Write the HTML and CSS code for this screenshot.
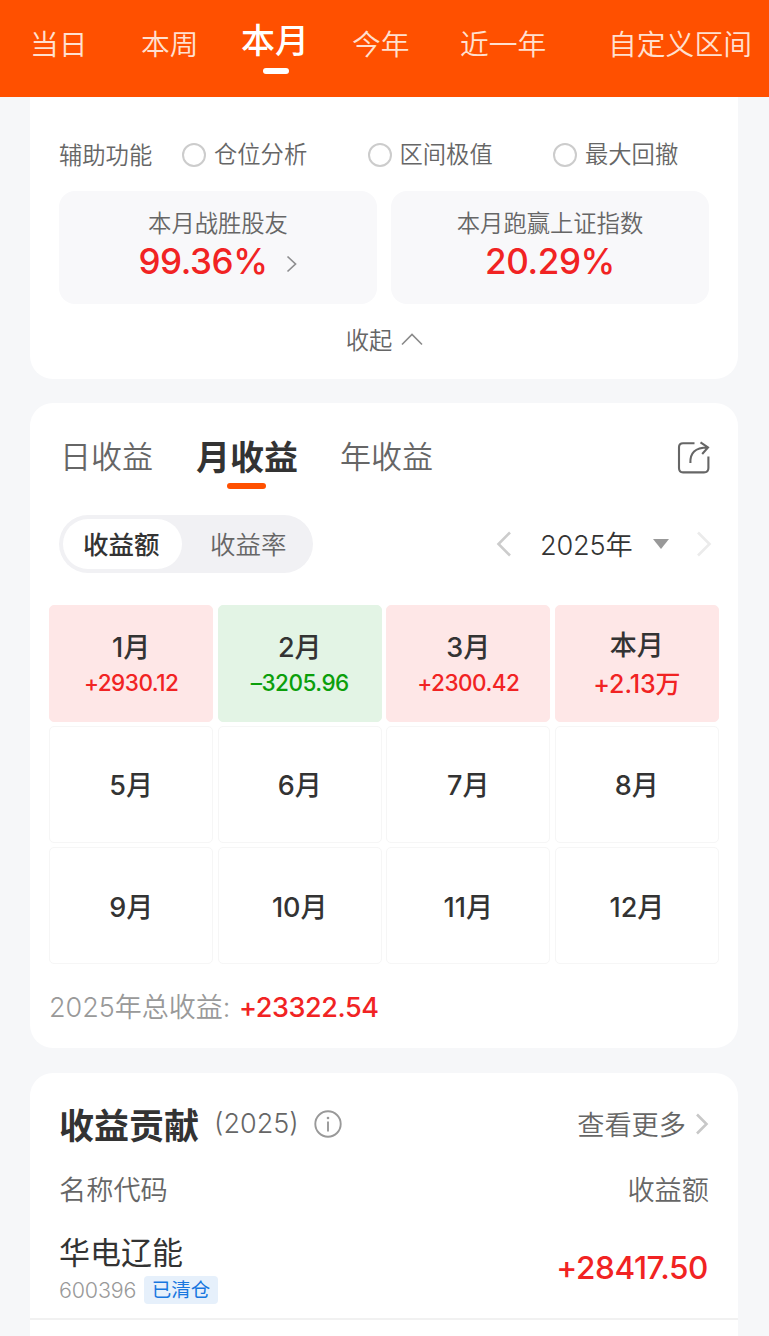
FILE: index.html
```html
<!DOCTYPE html>
<html lang="zh-CN">
<head>
<meta charset="utf-8">
<title>收益分析</title>
<link rel="stylesheet" href="styles.css">
</head>
<body>
<nav class="period-bar">
  <span class="period period-day">当日</span>
  <span class="period period-week">本周</span>
  <span class="period period-month active">本月</span>
  <span class="period period-year">今年</span>
  <span class="period period-recent">近一年</span>
  <span class="period period-custom">自定义区间</span>
</nav>
<main>
  <section class="card card-summary">
    <div class="options">
      <span class="options-title">辅助功能</span>
      <label class="option"><i class="radio"></i>仓位分析</label>
      <label class="option"><i class="radio"></i>区间极值</label>
      <label class="option"><i class="radio"></i>最大回撤</label>
    </div>
    <div class="stats">
      <div class="stat">
        <div class="stat-label">本月战胜股友</div>
        <div class="stat-value">99.36%<svg class="stat-arrow" width="12" height="18" viewBox="0 0 12 18"><path d="M1.500 1.500 9.500 9 1.500 16.500" fill="none" stroke="#8d8d8f" stroke-width="1.7"/></svg></div>
      </div>
      <div class="stat">
        <div class="stat-label">本月跑赢上证指数</div>
        <div class="stat-value">20.29%</div>
      </div>
    </div>
    <div class="collapse">收起<svg width="22" height="14" viewBox="0 0 22 14"><path d="M1 12.5 11 2.5 21 12.5" fill="none" stroke="#8a8a8a" stroke-width="1.6"/></svg></div>
  </section>

  <section class="card card-calendar">
    <div class="tabs">
      <span class="tab">日收益</span>
      <span class="tab active">月收益</span>
      <span class="tab">年收益</span>
      <svg class="share" width="34" height="34" viewBox="0 0 34 34" fill="none" stroke="#666" stroke-width="2.1"><path d="M17.5 2.2H6Q2 2.2 2 6.2V27Q2 31.400 6 31.400H27Q31.400 31.400 31.400 27V15.500"/><path d="M13.400 22C13 12 18 6.500 30.500 6.500M23.500 1.400 31 6.500 25.200 13"/></svg>
    </div>
    <div class="controls">
      <div class="segment"><span class="seg active">收益额</span><span class="seg">收益率</span></div>
      <div class="year-picker">
        <svg class="prev" width="16" height="26" viewBox="0 0 16 26"><path d="M14 1.500 2.500 13 14 24.500" fill="none" stroke="#ccc" stroke-width="2.600"/></svg>
        <span class="year">2025年</span>
        <svg class="caret" width="16" height="10" viewBox="0 0 16 10"><path d="M0 0H16L8 10Z" fill="#999"/></svg>
        <svg class="next" width="16" height="26" viewBox="0 0 16 26"><path d="M2 1.500 13.500 13 2 24.500" fill="none" stroke="#ebebeb" stroke-width="2.600"/></svg>
      </div>
    </div>
    <div class="months">
      <div class="month gain"><b>1月</b><em>+2930.12</em></div>
      <div class="month loss"><b>2月</b><em>–3205.96</em></div>
      <div class="month gain"><b>3月</b><em>+2300.42</em></div>
      <div class="month gain current"><b>本月</b><em>+2.13万</em></div>
      <div class="month"><b>5月</b></div>
      <div class="month"><b>6月</b></div>
      <div class="month"><b>7月</b></div>
      <div class="month"><b>8月</b></div>
      <div class="month"><b>9月</b></div>
      <div class="month"><b>10月</b></div>
      <div class="month"><b>11月</b></div>
      <div class="month"><b>12月</b></div>
    </div>
    <div class="total"><span class="total-label">2025年总收益:</span><span class="total-value">+23322.54</span></div>
  </section>

  <section class="card card-contrib">
    <header class="contrib-head">
      <h2>收益贡献</h2>
      <span class="contrib-year">(2025)</span>
      <svg class="info" width="28" height="28" viewBox="0 0 28 28"><circle cx="14" cy="14" r="12.700" fill="none" stroke="#999" stroke-width="1.900"/><circle cx="14" cy="8" r="1.300" fill="#999"/><path d="M14 11.500V21.500" stroke="#999" stroke-width="1.900"/></svg>
      <span class="more">查看更多</span>
      <svg width="14" height="22" viewBox="0 0 14 22"><path d="M2 1.500 11.500 11 2 20.500" fill="none" stroke="#c8c8c8" stroke-width="2.600"/></svg>
    </header>
    <div class="columns"><span>名称代码</span><span>收益额</span></div>
    <div class="stock">
      <div class="stock-info">
        <div class="stock-name">华电辽能</div>
        <div class="stock-meta"><span class="stock-code">600396</span><span class="tag">已清仓</span></div>
      </div>
      <div class="stock-profit">+28417.50</div>
    </div>
  </section>
</main>
</body>
</html>
```
FILE: styles.css
```css
* { box-sizing: border-box; }
body {
  margin: 0;
  height: 1336px;
  overflow: hidden;
  background: #f6f7f9;
  color: #333;
  font-family: Inter, "Noto Sans CJK SC", sans-serif;
  font-weight: 350;
  white-space: nowrap;
}
svg { display: block; flex: none; }
.period-bar {
  display: flex;
  height: 97px;
  padding-left: 30px;
  background: #ff5000;
}
.period {
  height: 90px;
  line-height: 90px;
  font-size: 28.8px;
  color: #ffe0d0;
  flex: none;
}
.period-day { width: 111px; }
.period-week { width: 100px; }
.period-month { width: 111px; }
.period-year { width: 108px; }
.period-recent { width: 148px; }
.period.active {
  color: #fff;
  font-size: 34px;
  font-weight: 500;
  line-height: 82px;
}
.period.active::after {
  content: "";
  display: block;
  width: 26px;
  height: 6px;
  margin: -14px 0 0 22px;
  border-radius: 3px;
  background: #fff;
}
main { padding: 0 31px 0 30px; }
.card { background: #fff; border-radius: 23px; }
.card-summary {
  height: 282px;
  padding: 35px 29px 0;
  border-radius: 0 0 23px 23px;
  color: #666;
  font-size: 23.3px;
}
.options { display: flex; height: 46px; line-height: 48px; }
.options-title { width: 123px; }
.option { display: flex; align-items: center; width: 185.5px; flex: none; }
.option:last-child { width: auto; }
.radio {
  width: 24px;
  height: 24px;
  margin-right: 8px;
  border: 2px solid #ccc;
  border-radius: 50%;
}
.stats { display: flex; gap: 14px; margin-top: 13px; }
.stat {
  flex: 1;
  height: 113px;
  padding-top: 16px;
  border-radius: 16px;
  background: #f8f8fa;
  text-align: center;
}
.stat-label { height: 32px; line-height: 33px; }
.stat-value {
  display: flex;
  justify-content: center;
  align-items: center;
  height: 44px;
  color: #f12323;
  font-size: 35px;
  font-weight: 500;
  letter-spacing: -0.4px;
}
.stat-arrow { margin: 6px 0 0 18px; }
.collapse {
  display: flex;
  justify-content: center;
  align-items: center;
  gap: 9px;
  height: 70px;
  padding-left: 1px;
}
.card-calendar { height: 645px; margin-top: 24px; padding: 0 19px; }
.tabs { display: flex; height: 112px; padding-left: 11px; }
.tab {
  width: 135px;
  height: 90px;
  line-height: 108px;
  color: #666;
  font-size: 31px;
  flex: none;
}
.tab.active { width: 145px; padding-left: 1px; color: #333; font-size: 34px; font-weight: 700; line-height: 110px; }
.tab.active::after {
  content: "";
  display: block;
  width: 39px;
  height: 6px;
  margin: -30px 0 0 31px;
  border-radius: 3px;
  background: #ff5000;
}
.share { margin: 38px 8px 0 auto; }
.controls {
  display: flex;
  justify-content: space-between;
  align-items: center;
  height: 58px;
  padding: 0 7px 0 10px;
}
.segment {
  display: flex;
  width: 254px;
  height: 58px;
  padding: 4px;
  border-radius: 29px;
  background: #f1f1f4;
  font-size: 25.500px;
  line-height: 52px;
  color: #666;
}
.seg { flex: 1; height: 50px; padding-left: 28px; }
.seg.active {
  flex: 0 0 119px;
  padding-left: 20px;
  border-radius: 25px;
  background: #fff;
  color: #333;
  font-weight: 500;
}
.year-picker { display: flex; align-items: center; font-size: 27.200px; }
.year { width: 92px; margin: -2px 21px 0 28px; letter-spacing: -0.2px; }
.next { margin-left: 27px; }
.months {
  display: grid;
  grid-template-columns: repeat(4, 1fr);
  grid-auto-rows: 117px;
  gap: 4.300px;
  margin-top: 31.500px;
}
.month {
  display: flex;
  flex-direction: column;
  align-items: center;
  justify-content: center;
  padding-top: 4px;
  border: 1.500px solid #f6f6f6;
  border-radius: 5px;
}
.month b { font-size: 27px; font-weight: 500; line-height: 36px; }
.month em { font-size: 22.500px; font-weight: 500; font-style: normal; line-height: 34px; letter-spacing: -0.5px; }
.month.gain { background: #fee7e7; border-color: #fee7e7; }
.month.loss { background: #e3f4e5; border-color: #e3f4e5; }
.gain em { color: #f12323; }
.loss em { color: #0b9f0b; }
.month.current b { line-height: 38px; }
.month.current em { font-size: 25px; line-height: 38px; letter-spacing: -0.1px; }
.total { display: flex; height: 86px; line-height: 87px; font-size: 27px; }
.total-label { width: 190px; color: #999; }
.total-value { color: #f12323; font-weight: 500; letter-spacing: -0.4px; }
.card-contrib { height: 290px; margin-top: 25px; padding: 0 29px; }
.contrib-head { display: flex; align-items: center; height: 101px; }
h2 { margin: 0; width: 155px; font-size: 35px; font-weight: 700; }
.contrib-year { width: 100px; color: #666; font-size: 27px; }
.more { margin: -2px 9px 0 auto; color: #666; font-size: 27.200px; }
.columns {
  display: flex;
  justify-content: space-between;
  height: 32px;
  line-height: 34px;
  color: #666;
  font-size: 27.200px;
}
.stock {
  display: flex;
  justify-content: space-between;
  height: 114px;
  margin: 0 -29px;
  padding: 24px 30px 0 29px;
  border-bottom: 2px solid #f1f1f1;
}
.stock-name { height: 46px; line-height: 46px; font-size: 31px; font-weight: 400; }
.stock-meta { display: flex; height: 28px; line-height: 28px; }
.stock-code { width: 85px; color: #999; font-size: 21.500px; letter-spacing: -0.2px; }
.tag {
  width: 74px;
  border-radius: 4px;
  background: #e6f0fb;
  color: #1877df;
  font-size: 19.500px;
  font-weight: 400;
  text-align: center;
}
.stock-profit { color: #f12323; font-size: 31.500px; font-weight: 500; line-height: 76px; letter-spacing: -0.4px; }
```
